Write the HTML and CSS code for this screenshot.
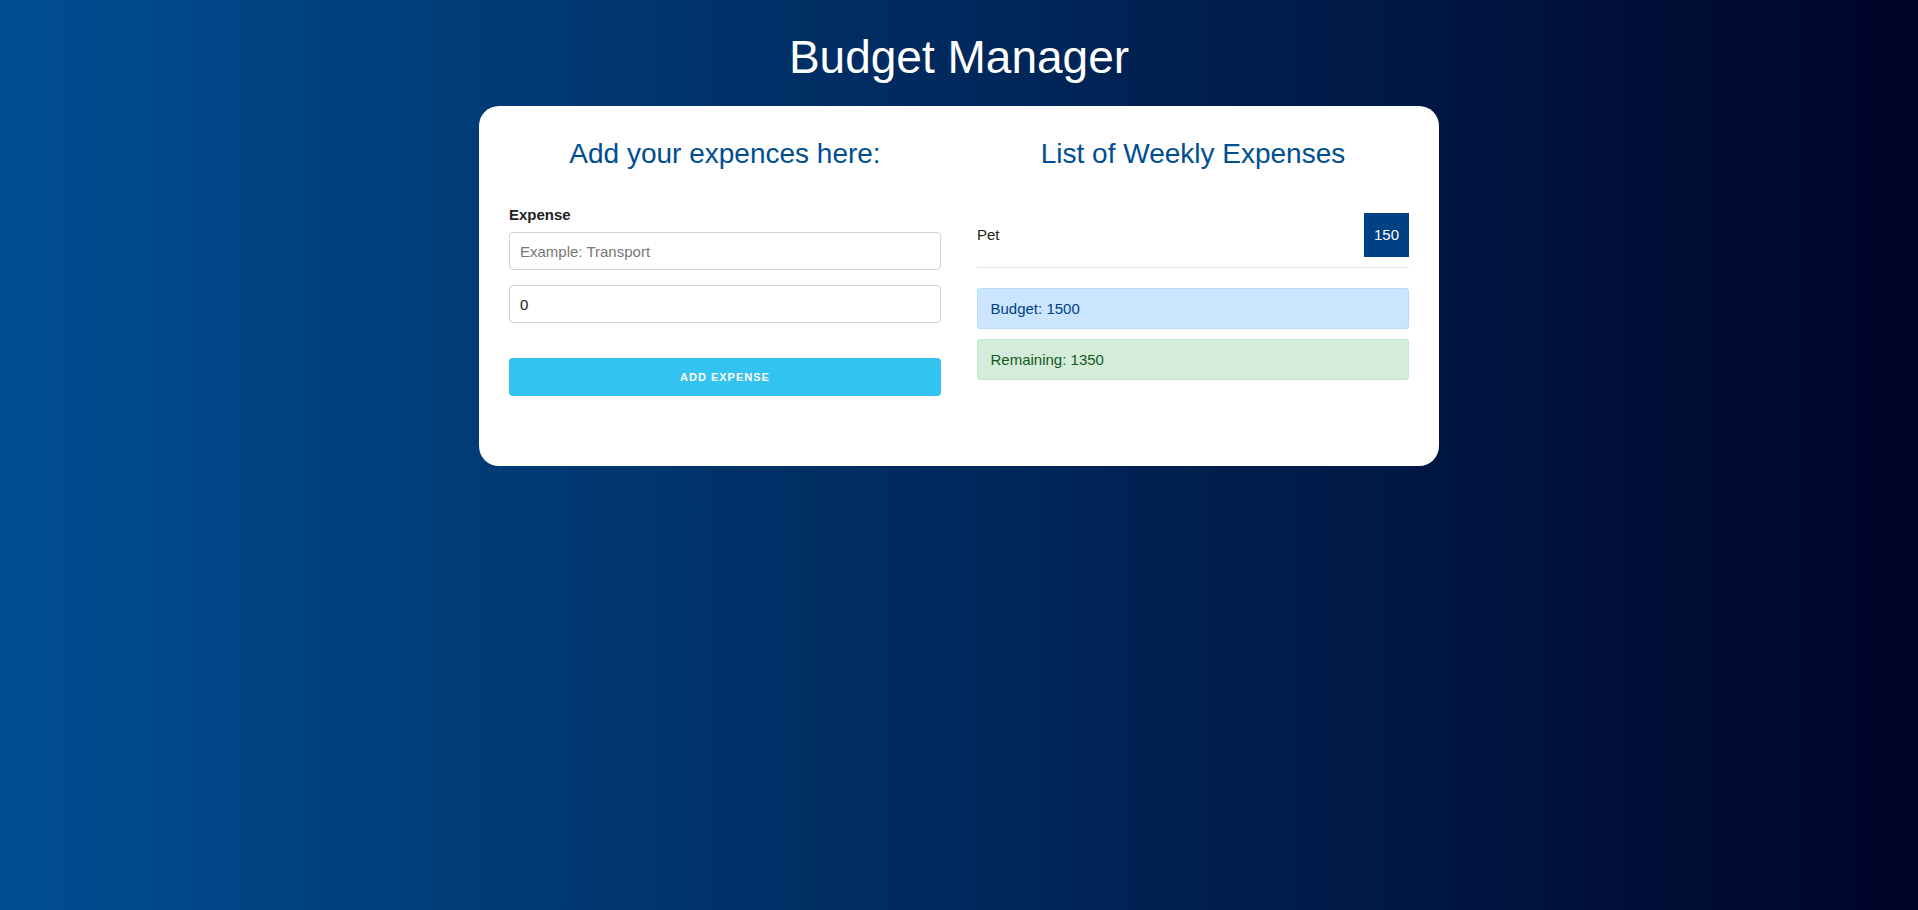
FILE: index.html
```html
<!DOCTYPE html>
<html lang="en">
<head>
<meta charset="utf-8">
<title>Budget Manager</title>
<link rel="stylesheet" href="styles.css">
</head>
<body>
<div class="page">
  <h1 class="title">Budget Manager</h1>
  <main class="card">
    <section class="col">
      <h2 class="col-title">Add your expences here:</h2>
      <form class="form">
        <label class="label" for="expense">Expense</label>
        <input class="input" id="expense" type="text" placeholder="Example: Transport">
        <input class="input" type="number" value="0">
        <button class="btn" type="button">Add expense</button>
      </form>
    </section>
    <section class="col">
      <h2 class="col-title">List of Weekly Expenses</h2>
      <ul class="list">
        <li class="item"><span class="item-name">Pet</span><span class="badge">150</span></li>
      </ul>
      <div class="alert alert-primary">Budget: 1500</div>
      <div class="alert alert-success">Remaining: 1350</div>
    </section>
  </main>
</div>
</body>
</html>
```

FILE: styles.css
```css
* { box-sizing: border-box; }
html, body { margin: 0; padding: 0; }
body {
  min-height: 100vh;
  background: linear-gradient(to right, #004e92, #000428);
  font-family: "Liberation Sans", Arial, sans-serif;
  font-size: 15px;
  line-height: 24px;
  color: #222;
}
.page {
  padding-top: 29px;
}
.title {
  margin: 0 0 21px;
  text-align: center;
  color: #fff;
  font-size: 46px;
  line-height: 56px;
  font-weight: normal;
}
.card {
  width: 960px;
  margin: 0 auto;
  background: #fff;
  border-radius: 20px;
  padding: 31px 30px 70px;
  display: grid;
  grid-template-columns: 1fr 1fr;
  column-gap: 36px;
  align-items: start;
}
.col-title {
  margin: 0;
  text-align: center;
  color: #004e92;
  font-size: 28px;
  line-height: 34px;
  font-weight: normal;
}
.form {
  margin-top: 32px;
  display: flex;
  flex-direction: column;
}
.label {
  display: block;
  font-weight: bold;
  margin-bottom: 5px;
  color: #222;
}
.input {
  height: 38px;
  padding: 6px 10px;
  border: 1px solid #d1d1d1;
  border-radius: 4px;
  font-family: inherit;
  font-size: 15px;
  color: #222;
  background: #fff;
  margin-bottom: 15px;
  outline: none;
}
.input::placeholder { color: #777; }
.input + .input { margin-bottom: 35px; }
.btn {
  height: 38px;
  border: 0;
  border-radius: 4px;
  background: #33c3f0;
  color: #fff;
  font-family: inherit;
  font-size: 11px;
  font-weight: bold;
  letter-spacing: 1px;
  text-transform: uppercase;
  cursor: pointer;
}
.list {
  list-style: none;
  margin: 42px 0 0;
  padding: 0;
}
.item {
  display: flex;
  justify-content: space-between;
  align-items: center;
  padding-bottom: 10px;
  border-bottom: 1px solid #e1e1e1;
}
.badge {
  background: #004085;
  color: #fff;
  padding: 10px 10px;
  line-height: 24px;
}
.list + .alert { margin-top: 20px; }
.alert {
  padding: 7.5px 12.5px;
  border: 1px solid transparent;
  border-radius: 2.5px;
  margin-bottom: 10px;
}
.alert-primary {
  background: #cce5ff;
  border-color: #b8daff;
  color: #004085;
}
.alert-success {
  background: #d4edda;
  border-color: #c3e6cb;
  color: #155724;
}
```
